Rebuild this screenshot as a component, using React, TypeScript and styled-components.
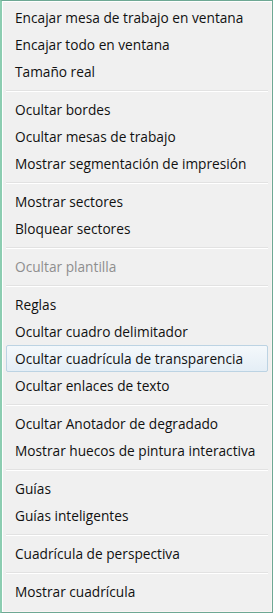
import React from 'react';
import styled, { createGlobalStyle } from 'styled-components';

const GlobalStyle = createGlobalStyle`
  html, body {
    margin: 0;
    padding: 0;
    background: #f0f0f0;
  }
`;

const Menu = styled.div`
  box-sizing: border-box;
  width: 273px;
  height: 613px;
  padding: 3px 4px 0 4px;
  background: #f0f0f0;
  border: 1px solid #6ea894;
  border-left: 2px solid #8ccdb1;
  box-shadow: inset 1px 1px 0 #ffffff, inset -1px -1px 0 #fbf4f4;
  font-family: 'Open Sans', 'Noto Sans', sans-serif;
  font-size: 13.7px;
  color: #111;
  overflow: hidden;
`;

const Item = styled.div<{ disabled?: boolean; active?: boolean }>`
  box-sizing: border-box;
  height: 27px;
  line-height: 25px;
  padding-left: 8px;
  white-space: nowrap;
  border: 1px solid ${({ active }) => (active ? '#bcd3e3' : 'transparent')};
  border-radius: 2px;
  background: ${({ active }) =>
    active ? 'linear-gradient(to bottom, #f4f8fb, #e4eef6)' : 'transparent'};
  color: ${({ disabled }) => (disabled ? '#8e8e8e' : '#111')};
`;

const Separator = styled.div`
  height: 11px;
  display: flex;
  flex-direction: column;
  justify-content: center;

  &::before {
    content: '';
    display: block;
    height: 1px;
    background: #e2e2e2;
  }
  &::after {
    content: '';
    display: block;
    height: 1px;
    background: #ffffff;
  }
`;

type Entry = { label: string; disabled?: boolean; active?: boolean } | 'sep';

const entries: Entry[] = [
  { label: 'Encajar mesa de trabajo en ventana' },
  { label: 'Encajar todo en ventana' },
  { label: 'Tamaño real' },
  'sep',
  { label: 'Ocultar bordes' },
  { label: 'Ocultar mesas de trabajo' },
  { label: 'Mostrar segmentación de impresión' },
  'sep',
  { label: 'Mostrar sectores' },
  { label: 'Bloquear sectores' },
  'sep',
  { label: 'Ocultar plantilla', disabled: true },
  'sep',
  { label: 'Reglas' },
  { label: 'Ocultar cuadro delimitador' },
  { label: 'Ocultar cuadrícula de transparencia', active: true },
  { label: 'Ocultar enlaces de texto' },
  'sep',
  { label: 'Ocultar Anotador de degradado' },
  { label: 'Mostrar huecos de pintura interactiva' },
  'sep',
  { label: 'Guías' },
  { label: 'Guías inteligentes' },
  'sep',
  { label: 'Cuadrícula de perspectiva' },
  'sep',
  { label: 'Mostrar cuadrícula' },
];

export default function App() {
  return (
    <>
      <GlobalStyle />
      <Menu>
        {entries.map((e, i) =>
          e === 'sep' ? (
            <Separator key={i} />
          ) : (
            <Item key={i} disabled={e.disabled} active={e.active}>
              {e.label}
            </Item>
          )
        )}
      </Menu>
    </>
  );
}
